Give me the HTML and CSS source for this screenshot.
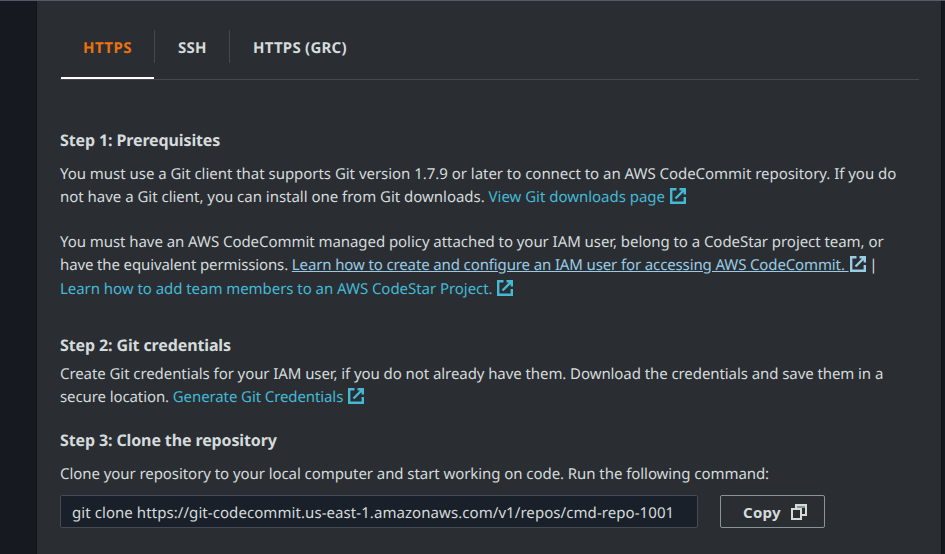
FILE: index.html
```html
<!DOCTYPE html>
<html lang="en">
<head>
<meta charset="utf-8">
<title>Connection steps</title>
<link rel="stylesheet" href="styles.css">
</head>
<body>
<svg class="defs" width="0" height="0"><symbol id="ext" viewBox="0 0 16 16"><path d="M9.5 1.2H14.8V6.5M5.5 10.5L14.5 1.5M14.8 9v5.8H1.2V1.2H6.5"/></symbol></svg>
<main class="panel">
  <nav class="tabs">
    <div class="tab active"><span>HTTPS</span></div>
    <div class="tab ssh"><span>SSH</span></div>
    <div class="tab"><span>HTTPS (GRC)</span></div>
  </nav>
  <section class="step one">
    <h2>Step 1: Prerequisites</h2>
    <p><span class="t1">You must use a Git client that supports Git version 1.7.9 or later to connect to an AWS CodeCommit repository. If you do</span><br><span class="t2">not have a Git client, you can install one from Git downloads. <a>View Git downloads page <svg class="ext"><use href="#ext"/></svg></a></span></p>
    <p><span class="t3">You must have an AWS CodeCommit managed policy attached to your IAM user, belong to a CodeStar project team, or</span><br><span class="t4">have the equivalent permissions. <a class="hover"><span>Learn how to create and configure an IAM user for accessing AWS CodeCommit. </span><svg class="ext"><use href="#ext"/></svg></a> |</span><br><a class="t5">Learn how to add team members to an AWS CodeStar Project. <svg class="ext"><use href="#ext"/></svg></a></p>
  </section>
  <section class="step two">
    <h2>Step 2: Git credentials</h2>
    <p><span class="t6">Create Git credentials for your IAM user, if you do not already have them. Download the credentials and save them in a</span><br><span class="t7">secure location. <a>Generate Git Credentials <svg class="ext"><use href="#ext"/></svg></a></span></p>
  </section>
  <section class="step three">
    <h2>Step 3: Clone the repository</h2>
    <p class="t8">Clone your repository to your local computer and start working on code. Run the following command:</p>
    <div class="clone">
      <div class="command">git clone https://git-codecommit.us-east-1.amazonaws.com/v1/repos/cmd-repo-1001</div>
      <button class="copy">Copy <svg viewBox="0 0 16 16"><path class="shade" d="M5 2h9v2H5z"/><path d="M1 5h9v10H1zM5 5V1h10v10h-5"/></svg></button>
    </div>
  </section>
</main>
</body>
</html>
```
FILE: styles.css
```css
* { box-sizing: border-box; }
body { margin: 0; height: 554px; overflow: hidden; background: #16191f; border-top: 1px solid #545b64; color: #d5dbdb; font: 15px/23px "Noto Sans", sans-serif; text-rendering: geometricPrecision; }
.defs { display: block; height: 0; }
.panel { height: 553px; margin-left: 36px; margin-right: 3px; padding: 20px 22px 0 23px; background: #2a2e33; border: solid #111418; border-width: 0 1px; }
.tabs { display: flex; height: 59px; border-bottom: 1px solid #444950; padding-left: 1px; }
.tab { display: flex; align-items: flex-start; padding-top: 9px; font-weight: 700; font-size: 15px; line-height: 37px; letter-spacing: .25px; }
.tab span { height: 33px; padding: 0 22px 0 23px; border-left: 1px solid #444950; }
.tab.active { width: 93px; color: #ec7211; border-bottom: 2px solid #fff; }
.tab.ssh { width: 75px; }
.tab.active span { border: 0; padding: 0 22px; letter-spacing: .45px; }
h2, p { margin: 0; white-space: nowrap; }
h2 { font-size: 16px; line-height: 24px; letter-spacing: -.12px; }
.one { padding-top: 48px; }
.one p { margin-top: 11px; }
.one p + p { margin-top: 22px; line-height: 23.4px; }
.two { padding-top: 31.8px; }
.two p { margin-top: 6px; }
.three { padding-top: 19px; }
.three p { margin-top: 11px; }
.t1 { letter-spacing: -.03px; }
.t2 { letter-spacing: -.02px; }
.t3 { letter-spacing: -.054px; }
.t4 { letter-spacing: -.125px; }
.t5 { letter-spacing: -.045px; }
.t6 { letter-spacing: -.076px; }
.t7 { letter-spacing: -.1px; }
.t8 { letter-spacing: -.064px; }
a { color: #44b9d6; }
.hover { color: #99cbe4; }
.hover span { text-decoration: underline; white-space: pre; }
svg { fill: none; stroke: currentColor; stroke-width: 2; }
.ext { width: 16px; height: 16px; vertical-align: -2px; margin-left: 1px; stroke-width: 2.4; }
.clone { display: flex; gap: 22px; margin-top: 9px; }
.command, .copy { height: 33px; border: 1px solid #444b55; border-radius: 2px; }
.command { width: 638px; padding: 0 11px; background: #1a2029; line-height: 34px; white-space: nowrap; letter-spacing: .068px; }
.copy { display: flex; align-items: center; justify-content: center; gap: 10px; width: 105px; padding: 1px 2px 0 7px; background: transparent; border-color: #879596; color: #d5dbdb; font: 700 15px "Noto Sans", sans-serif; letter-spacing: .3px; }
.copy svg { width: 16px; height: 16px; margin-top: -1px; }
.shade { fill: #879596; stroke: none; }
```
